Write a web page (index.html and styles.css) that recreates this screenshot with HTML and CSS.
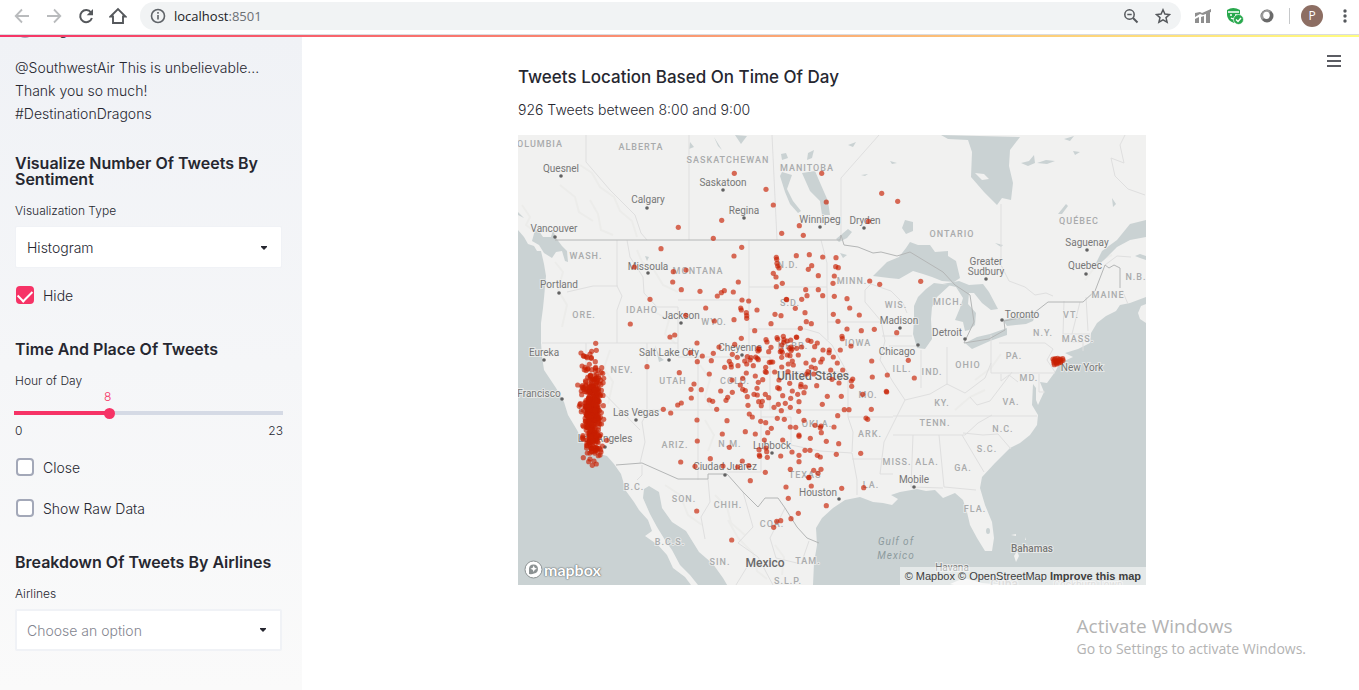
FILE: index.html
```html
<!DOCTYPE html>
<html lang="en">
<head>
<meta charset="utf-8">
<title>Tweets Location</title>
<link rel="stylesheet" href="styles.css">
</head>
<body>
<header class="toolbar">
  <button class="tool" aria-label="Back"><svg width="16" height="16" viewBox="0 0 16 16" fill="none" stroke="#b9bbbd" stroke-width="1.8"><path d="M15 8H2M8 1.5 1.700 8 8 14.500"/></svg></button>
  <button class="tool" aria-label="Forward"><svg width="16" height="16" viewBox="0 0 16 16" fill="none" stroke="#b9bbbd" stroke-width="1.8"><path d="M1 8h13M8 1.500 14.300 8 8 14.500"/></svg></button>
  <button class="tool" aria-label="Reload"><svg width="16" height="16" viewBox="0 0 16 16"><path d="M13 4.500A6 6 0 1 0 13.900 10" fill="none" stroke="#55585c" stroke-width="2"/><path d="M15 1v6.300H8.700z" fill="#55585c"/></svg></button>
  <button class="tool" aria-label="Home"><svg width="18" height="18" viewBox="0 0 18 18" fill="none" stroke="#55585c" stroke-width="1.900"><path d="M1.500 9.500 9 2l7.500 7.500H14V16H4V9.500z"/></svg></button>
  <div class="address">
    <svg width="16" height="16" viewBox="0 0 16 16" fill="none" stroke="#5f6368" stroke-width="1.600"><circle cx="8" cy="8" r="6.500"/><path d="M8 7v4.500M8 4v1.700"/></svg>
    <span class="url">localhost<span class="port">:8501</span></span>
    <button class="tool" aria-label="Zoom"><svg width="16" height="16" viewBox="0 0 16 16" fill="none" stroke="#55585c" stroke-width="1.500"><circle cx="6.500" cy="6.500" r="4.700"/><path d="M10 10l4.500 4.500" stroke-width="2"/><path d="M4.300 6.500h4.400"/></svg></button>
    <button class="tool" aria-label="Bookmark"><svg width="16" height="16" viewBox="0 0 16 16" fill="none" stroke="#55585c" stroke-width="1.500"><path d="M8 1.800l1.900 4.300 4.600.4-3.500 3.100 1.100 4.600L8 11.800l-4.100 2.400L5 9.600 1.500 6.500l4.600-.4z"/></svg></button>
  </div>
  <button class="tool" aria-label="Analytics"><svg width="16" height="16" viewBox="0 0 16 16" fill="#8f8f8f"><path d="M0 5l5-1 2 1 9-4v3L8 7 5 6 0 9zM0 11l4-2v6H0zM6 9l3-1v7H6zM11 6l4-2v11h-4z"/></svg></button>
  <button class="tool" aria-label="Safety"><svg width="18" height="18" viewBox="0 0 18 18"><path d="M1 3q6-4 13 0v5q0 5-6 8-7-3-7-8z" fill="#28a84d"/><path d="M2 5h11M4 8h2M9 8h2M5 11q3 2 5-1" stroke="#fff" fill="none" stroke-width="1.300"/><circle cx="12.500" cy="12.500" r="5" fill="#28a84d" stroke="#fff" stroke-width=".7"/><path d="M10 12.500l2 2 3-3.500" fill="none" stroke="#fff" stroke-width="1.400"/></svg></button>
  <button class="tool" aria-label="Extension"><svg width="16" height="16" viewBox="0 0 16 16"><circle cx="8" cy="8" r="6.500" fill="#6a6a6a"/><path d="M3 12A6.500 6.500 0 0 1 12 3L8 8z" fill="#999"/><ellipse cx="7.500" cy="7.300" rx="3.300" ry="3.600" fill="#fff"/></svg></button>
  <span class="rule"></span>
  <button class="avatar" aria-label="Profile">P</button>
  <button class="tool dots" aria-label="Menu"><svg width="16" height="16" viewBox="0 0 16 16" fill="#55585c"><circle cx="8" cy="3" r="1.700"/><circle cx="8" cy="8" r="1.700"/><circle cx="8" cy="13" r="1.700"/></svg></button>
</header>
<div class="ribbon"></div>
<div class="app">
  <aside class="sidebar">
    <label class="check first"><input type="radio" name="mood"><span>negative</span></label>
    <p class="tweet">@SouthwestAir This is unbelievable... Thank you so much! #DestinationDragons</p>
    <h2>Visualize Number Of Tweets By Sentiment</h2>
    <label class="label" for="viz">Visualization Type</label>
    <div class="picker"><select id="viz"><option>Histogram</option></select><svg class="caret" width="6" height="4" viewBox="0 0 6 4"><path d="M0 0h6v1L3 4 0 1z" fill="#262730"/></svg></div>
    <label class="check"><input type="checkbox" checked><span>Hide</span></label>
    <h2 class="gap">Time And Place Of Tweets</h2>
    <label class="label" for="hour">Hour of Day</label>
    <div class="slider">
      <div class="value"><output for="hour">8</output></div>
      <input id="hour" type="range" min="0" max="23" value="8">
      <div class="ends"><span>0</span><span>23</span></div>
    </div>
    <label class="check"><input type="checkbox"><span>Close</span></label>
    <label class="check next"><input type="checkbox"><span>Show Raw Data</span></label>
    <h2 class="gap">Breakdown Of Tweets By Airlines</h2>
    <label class="label" for="air">Airlines</label>
    <div class="picker outlined"><select id="air" class="empty"><option>Choose an option</option></select><svg class="caret" width="6" height="4" viewBox="0 0 6 4"><path d="M0 0h6v1L3 4 0 1z" fill="#262730"/></svg></div>
  </aside>
  <main class="main">
    <button class="burger" aria-label="Main menu"><svg width="14" height="12" viewBox="0 0 14 12" stroke="#262730" stroke-width="1.500"><path d="M0 1h14M0 6h14M0 11h14"/></svg></button>
    <section class="content">
      <h1>Tweets Location Based On Time Of Day</h1>
      <p class="summary">926 Tweets between 8:00 and 9:00</p>
      <div class="map">
        <svg class="canvas" viewBox="518 135 628 450" role="img" aria-label="Map of tweets">
          <rect x="518" y="135" width="628" height="450" fill="#f1f1f0"/>
          <g class="relief">
            <path d="M522 205l8 12-4 8 12 9M580 165l12 8 8 14 14 10 6 14 12 10 5 16M560 185l15 12 4 15 14 9M590 200l8 14 3 16 12 5M555 262l8 10-5 18 9 15-5 22M637 250l5 12 12 8 9 15 15 7M580 350l12 14-3 20M655 312l14 8-4 14 11 10M700 365l10 14-5 18 8 14M610 350l-6 18 9 14-5 22M705 420l9 15-6 16M715 495l12 12 4 16 14 12M728 520l10 18 15 15 4 18 10 8M775 545l9 12-2 18M665 485l15 10 8 20 14 10M975 380l16-12 10-14M955 410l15-13 15-7M1085 280l15-20 12-5"/>
          </g>
          <g class="water">
            <path d="M518 230l6 7 4 7 6 2 3 5h4l3 13 2 12-2 22-1 10-2 15v20l1 13 2 14 6 9 6 9 8 14 4 13 9 15 7 14 8 8 8 2 7 2 7 8 7 10 5 17 8 11 5 8 9 10 4 11-7 5 13 9 9 10 6 13 12 9 9 12 4-4-8-10-10-10-8-15-7-10-8-13-7-13-7-16 1-9 5-3 10 6 3 16 10 14 14 9 13 21 14 12 10 14 10 17v3H518z"/>
            <path d="M518 212l6 6-6-3zM535 230l4 1 4 6h8l2-7 3 8 6 8 5 5 1 11-3-1-3-10-6 1-4 6-8-5-5-8-7-4z"/>
            <path d="M813 585L814 563L817 545L816 528L822 518L833 508L845 500L860 497L873 502L883 503L892 505L898 499L891 495L900 492L917 489L926 491L935 490L943 498L955 493L963 500L967 512L970 525L977 538L985 551H992L994 538L992 522L985 505L980 488L982 477L995 463L1010 448L1020 443L1030 435L1037 425L1038 415L1032 405L1033 384L1036 388L1036 400L1038 405L1044 392L1040 382L1047 383L1055 372L1060 363L1073 357L1065 353L1078 349L1090 343L1091 333L1097 323L1106 316L1116 311L1120 305L1130 303L1146 297V585z"/>
            <path d="M1093 269l9-18 15-11 13-16 16-4v17l-16 3-13 7-13 13zM1135 256l5-2 6 2v4l-6-2z"/>
            <path d="M941 135l7 4 20 1 4 12-1 25 13 15 13 13 5-7 9 2 2-17-4-17 1-16 10-13z"/>
            <path d="M873 276l14-14 12-5 7-9 4-6 8 3 12 0 5 7 13-1v5l8 5 4 17-6 4-12-1-10-4-9-3-10-3-14 8-10-1z"/>
            <path d="M914 306l4-9 8-8 8-6 16 2-13 12-5 10-1 12 1 20-7 10-8-1-4-14 1-14z"/>
            <path d="M937 285l22-4 10 4 14-1 6 8 9 17-7 1-9-7-8-10-5 0-1 11 8 9-1 12-6 5-4 1-2-9-8-2 5-12 3-10-7-11-13-3z"/>
            <path d="M965 343l12-6 13-3 17-6v7l-17 6-18 8zM1003 320l8-2 15-1 10-5-3 9-7 3-19 2z"/>
            <path d="M802 173l13-2 6 14 7 16 2 14h-8l-2-14-10-10zM782 172l10 3-5 14 6 12 8 10-3 2-8-9-5-12-5-16zM808 153l6-3-2 8-5 2zM781 154l5-1 2 5-6 2z"/>
            <path d="M905 220l8 2v9l-7 3-4-6zM848 229l4 3-5 6-8 4-3-3zM848 145l8-3-3 5zM840 253l7 2-4 3zM861 175l7-1-3 2zM890 161l7 2-5 1zM1021 163l8-2 5-6 1 8-7 3zM1037 163l9-3 9 1-8 3zM1058 214l8-10 2 2-6 8zM1112 198l4 6-3 3zM1064 139l10-3-4 5zM1073 151l7 1-5 3zM690 142l4 5-5 2zM714 137l4 9 4 4zM735 135l12 1-6 8zM995 243l8 2-2 2zM645 256l4 1-2 4zM655 345l5 12 4 3-5 2z"/>
          </g>
          <g fill="#f1f1f0"><path d="M975 173l9 1 5 5-7 1zM1138 313l3-7 5-2v19l-6-4zM1011 535l5-1v2zM1014 556l3-5 2 5-3 6zM1025 537l1 3h-1zM950 584l14-6 18 5 22 2h-50z"/></g>
          <ellipse cx="988" cy="531" rx="2" ry="3" fill="#cad2d3"/>
          <g class="states">
            <path d="M586 135v27l24 28 25 25 6 18 6 7M689 135v105M772 135l5 105M841 240v-62l38-43M1001 204v61l8 16 16 6 10 8 11-2 7 3"/>
            <path d="M567 292l26-6h25M617 240v46l5 10-5 14v33M542 343h136M627 240l3 17 13 20 1 16 13 14h21M678 307v50h92v53M678 300h71M749 240v117M749 287h78M749 329h56l14 4 13 12 15 27M821 240l6 23v24l1 53M827 322h55M586 343v32l54 55M647 343v70l-5 9 3 20-5 21M698 357v123M632 410h215M770 372h70M761 410v62h-34M761 417h30v28l29 6 32 2M852 452l1-20-5-15v-45M852 459h30M852 453l5 27v15M848 417h45M865 290l6-6 20 7 12 12 4 10M865 290v12l16 19 4 20-5 19 13 22 12 18-9 18-12 24-4 32h13M882 336h30M889 346h31M921 350v38M947 347v38M991 335v38h64M999 343h46l8 6-6 11 8 12M905 400l25-6 17-10 18 9 20-15 6-15M970 397l7 8 13-4 22-29M893 416h144M893 435h72l13-12 14-8M963 433l20 2 15-1 13 15M962 435l22 37M939 435l5 52 32 3M913 435l-2 52 32 1M1001 374v7l8-6 9 7M1039 374v18h6M1064 301l-1 34M1063 334h27M1063 342h20v9M1086 297l2 34M1072 334l8-32M1122 290l6 14M1105 265l12-9 14 1"/>
            <path d="M642 465v10l-5 5M708 479l2 23-9 15 4 22M743 492l10 35-15 16 20 14 15 28M785 508l-15 30 6 20 25 6 8-23M750 562l-14 23M1125 135l-5 10 4 18-13-5 4 18 13 13 17 6"/>
          </g>
          <g class="nations"><path d="M555 240h285l1-5 3 10 14 2 15 6 8-1 16 4 13-4 33 20 12 13 15 10 4 27-10 21 25-4 16-9-1-9 26-5 18-14h35l12-11 10-26 4 3 5-3 6 3v20"/><path d="M616 465l26-2 36 16h30v-5h19l16 18 15 15 7-9h13l7 10 12 19 10 11 12 5"/></g>
          <g class="region">
            <text x="540" y="147">OLUMBIA</text><text x="641" y="150">ALBERTA</text><text x="728" y="163">SASKATCHEWAN</text><text x="807" y="171">MANITOBA</text><text x="952" y="237">ONTARIO</text><text x="1079" y="224">QUÉBEC</text><text x="586" y="259">WASH.</text><text x="698" y="274">MONTANA</text><text x="788" y="268">N.D.</text><text x="852" y="284">MINN.</text><text x="584" y="318">ORE.</text><text x="642" y="313">IDAHO</text><text x="714" y="325">WYO.</text><text x="790" y="306">S.D.</text><text x="896" y="308">WIS.</text><text x="948" y="305">MICH.</text><text x="1136" y="280">N.B.</text><text x="1108" y="298">MAINE</text><text x="1071" y="318">VT.</text><text x="1043" y="336">N.Y.</text><text x="1078" y="342">MASS.</text><text x="1014" y="359">PA.</text><text x="793" y="349">NEBR.</text><text x="858" y="346">IOWA</text><text x="622" y="373">NEV.</text><text x="673" y="384">UTAH</text><text x="735" y="384">COLO.</text><text x="590" y="412">CAL.</text><text x="868" y="398">MO.</text><text x="902" y="372">ILL.</text><text x="932" y="375">IND.</text><text x="968" y="368">OHIO</text><text x="1029" y="381">MD.</text><text x="942" y="406">KY.</text><text x="1011" y="405">VA.</text><text x="935" y="426">TENN.</text><text x="1003" y="432">N.C.</text><text x="987" y="452">S.C.</text><text x="963" y="471">GA.</text><text x="870" y="437">ARK.</text><text x="817" y="427">OKLA.</text><text x="675" y="448">ARIZ.</text><text x="730" y="447">N.M.</text><text x="805" y="478">TEXAS</text><text x="897" y="465">MISS.</text><text x="927" y="465">ALA.</text><text x="871" y="488">LA.</text><text x="975" y="512">FLA.</text><text x="634" y="490">B.C.</text><text x="684" y="502">SON.</text><text x="728" y="508">CHIH.</text><text x="670" y="545">B.C.S.</text><text x="720" y="565">SIN.</text><text x="772" y="527">COA.</text><text x="808" y="564">TAM.</text><text x="788" y="584">S.L.P.</text>
          </g>
          <g class="sea"><text x="896" y="545">Gulf of</text><text x="896" y="559">Mexico</text></g>
          <g class="city">
            <text x="561" y="172">Quesnel</text><text x="648" y="203">Calgary</text><text x="723" y="186">Saskatoon</text><text x="744" y="214">Regina</text><text x="820" y="223">Winnipeg</text><text x="865" y="224">Dryden</text><text x="554" y="232">Vancouver</text><text x="559" y="288">Portland</text><text x="648" y="270">Missoula</text><text x="681" y="319">Jackson</text><text x="986" y="265">Greater</text><text x="986" y="275">Sudbury</text><text x="1087" y="246">Saguenay</text><text x="1085" y="269">Quebec</text><text x="1022" y="318">Toronto</text><text x="947" y="336">Detroit</text><text x="899" y="324">Madison</text><text x="897" y="355">Chicago</text><text x="544" y="356">Eureka</text><text x="669" y="356">Salt Lake City</text><text x="740" y="351">Cheyenne</text><text x="539" y="397">Francisco</text><text x="636" y="416">Las Vegas</text><text x="605" y="442">Los Angeles</text><text x="725" y="470">Ciudad Juárez</text><text x="772" y="449">Lubbock</text><text x="818" y="496">Houston</text><text x="914" y="483">Mobile</text><text x="1082" y="371">New York</text><text x="1032" y="552" class="strong">Bahamas</text><text x="952" y="571">Havana</text>
          </g>
          <g class="country"><text x="813" y="380">United States</text><text x="765" y="567">Mexico</text><text x="1004" y="588" class="faint">Cuba</text></g>
          <text x="1088" y="588" class="town">Cockburn Town</text>
          <g id="towns" fill="#626262"></g>
          <g id="tweets" fill="#c81e00" fill-opacity=".65"></g>
        </svg>
        <a class="logo" href="#" aria-label="Mapbox"><svg width="19" height="19" viewBox="0 0 19 19"><circle cx="9.500" cy="9.500" r="8.500" fill="#fff" stroke="#8c9293"/><path d="M5 14V8.500A4.500 4.500 0 1 1 10 13.500Q8 14.500 5 14z" fill="#8c9293"/><path d="M9.700 5.500l1 2.300 2.300 1-2.300 1-1 2.300-1-2.300-2.300-1 2.300-1z" fill="#fff"/></svg><span>mapbox</span></a>
        <div class="credit"><a href="#">© Mapbox</a> <a href="#">© OpenStreetMap</a> <a href="#" class="improve">Improve this map</a></div>
      </div>
    </section>
  </main>
</div>
<div class="notice"><p class="big">Activate Windows</p><p>Go to Settings to activate Windows.</p></div>
<script src="map.js"></script>
</body>
</html>
```
FILE: styles.css
```css
* { box-sizing: border-box; }
body { margin: 0; height: 100vh; display: flex; flex-direction: column; overflow: hidden; background: #fff; color: #262730; font-family: Inter, "Open Sans", sans-serif; font-size: 14px; font-weight: 300; }
h1, h2, p { margin: 0; }
button { border: 0; padding: 0; background: none; font: inherit; color: inherit; }
.toolbar { flex: none; height: 35px; display: flex; align-items: center; padding: 0 6px 3px 14px; border-bottom: 1px solid #dadce0; font-family: "Open Sans", sans-serif; font-weight: 400; }
.tool { flex: none; width: 32px; height: 28px; display: flex; align-items: center; justify-content: center; }
.toolbar > .tool:first-child, .dots { width: 16px; }
.toolbar > .tool:nth-child(2) { margin-left: 8px; }
.address { flex: 1; height: 28px; display: flex; align-items: center; gap: 8px; margin: 0 6px; padding: 0 2px 0 10px; border-radius: 14px; background: #f1f3f4; }
.address .tool + .tool { margin-left: -8px; }
.url { flex: 1; font-size: 13px; color: #202124; }
.port { color: #6c7074; }
.rule { width: 1px; height: 16px; margin: 0 11px 0 6px; background: #c6c8ca; }
.avatar { width: 22px; height: 22px; margin-right: 14px; border-radius: 50%; background: #8d6e63; color: #fff; font-size: 12px; }
.ribbon { flex: none; height: 2px; background: linear-gradient(90deg, #f63366, #fffd80); }
.app { flex: 1; min-height: 0; display: flex; }
.sidebar { flex: none; width: 302px; padding: 0 20px 0 15px; overflow: hidden; background: linear-gradient(180deg, #f0f2f6, #fafafa); }
.tweet { margin-top: 17px; line-height: 23px; }
h2 { margin-top: 30px; font-size: 16px; line-height: 16px; font-weight: 600; }
h2.gap { margin-top: 36px; }
.label { display: block; margin-top: 15px; line-height: 18px; font-size: 12px; }
.picker { position: relative; height: 42px; margin-top: 6px; border: 1px solid #f0f2f6; border-radius: 2px; background: #fff; }
.picker.outlined { border-width: 2px; }
select { width: 100%; height: 100%; appearance: none; border: 0; padding: 0 11px; background: transparent; font: inherit; color: inherit; }
select.empty { padding: 0 10px; color: #83858f; }
.caret { position: absolute; right: 14px; top: 19px; pointer-events: none; }
.outlined .caret { top: 17px; }
.check { display: flex; align-items: center; gap: 9px; height: 20px; margin-top: 17px; padding-left: 1px; }
.check.first { margin-top: -18px; }
.check.next { margin-top: 21px; }
.check input { appearance: none; width: 18px; height: 18px; margin: 0; border: 2px solid #a3a8b8; border-radius: 4px; background: #fff; }
.check input[type="radio"] { border-radius: 50%; }
.check input:checked { display: grid; justify-items: center; align-items: start; padding-top: 4px; border: 0; background: #f63366; }
.check input:checked::after { content: ""; width: 12px; height: 7px; border: solid #fff; border-width: 0 0 2px 2px; transform: rotate(-45deg); }
.slider { margin: 0 -1px; font-size: 12px; }
.value { padding-left: 32%; line-height: 14px; color: #f63366; }
.value output { display: block; padding-left: 4px; }
input[type="range"] { display: block; width: 100%; height: 12px; margin: 3px 0; appearance: none; border-radius: 2px; background: linear-gradient(90deg, #f63366 35%, #d5dae5 35%) center / 100% 4px no-repeat; }
input[type="range"]::-webkit-slider-thumb { appearance: none; width: 11px; height: 11px; border-radius: 50%; background: #f63366; }
.ends { display: flex; justify-content: space-between; line-height: 18px; padding-left: 1px; margin-bottom: 16px; }
.main { flex: 1; min-width: 0; position: relative; padding: 28px 0 0 3px; }
.burger { position: absolute; right: 18px; top: 18px; line-height: 0; }
.content { max-width: 628px; margin: 0 auto; }
h1 { font-size: 17px; line-height: 24px; font-weight: 500; }
.summary { margin: 9px 0 14px; line-height: 23px; }
.map { position: relative; font-weight: 400; }
.canvas { display: block; width: 100%; height: auto; font-family: Roboto, sans-serif; }
.canvas text { text-anchor: middle; paint-order: stroke; stroke: #f1f1f0; stroke-opacity: .7; stroke-width: 2px; }
.water { fill: #cad2d3; }
.relief { fill: none; stroke: #ececea; stroke-width: 2; }
.states { fill: none; stroke: #dfdfdf; }
.nations { fill: none; stroke: #b4b6b6; }
.region { font-size: 9px; font-weight: 500; fill: #a9abac; letter-spacing: 1px; }
.city { font-size: 10px; fill: #777; }
.city .strong { font-weight: 500; }
.country { font-size: 12px; font-weight: 500; fill: #6a6a6a; }
.country .faint, .town { fill: #bbb; }
.town { font-size: 10px; }
.canvas .sea text { font-size: 10px; font-style: italic; fill: #8d9b9e; letter-spacing: 1px; stroke: none; }
.logo { position: absolute; left: 6px; bottom: 6px; display: flex; align-items: center; gap: 1px; color: #fff; text-decoration: none; font: 700 16px/19px Lato, sans-serif; text-shadow: 0 0 1px #70787a, 0 0 1px #70787a, 0 0 2px #70787a; }
.credit { position: absolute; right: 0; bottom: 0; padding: 0 5px; line-height: 18px; background: rgba(255, 255, 255, .5); font-family: "Liberation Sans", sans-serif; font-size: 11px; }
.credit a { color: #404040; text-decoration: none; }
.credit .improve { font-weight: 700; }
.notice { position: absolute; right: 53px; bottom: 32px; color: #b3b3b3; font-family: "Open Sans", sans-serif; font-weight: 400; line-height: 19px; pointer-events: none; }
.notice .big { font-size: 19px; line-height: 26px; }
```
FILE: map.js
```js
const SVG = "http://www.w3.org/2000/svg";

function dot(layer, x, y, r) {
  const c = document.createElementNS(SVG, "circle");
  c.setAttribute("cx", x.toFixed(1));
  c.setAttribute("cy", y.toFixed(1));
  c.setAttribute("r", r);
  layer.appendChild(c);
}

const towns = document.getElementById("towns");
"561,176 647,208 723,190 744,218 820,227 864,228 555,237 559,293 648,273 681,323 986,279 1087,250 1086,274 1002,320 965,339 900,328 918,345 544,360 669,360 742,355 562,399 636,420 605,447 725,475 772,453 839,499 914,487"
  .split(" ").forEach(p => { const [x, y] = p.split(",").map(Number); dot(towns, x, y, 1.8); });

// Each group holds an origin and its points in thirds of a map unit.
const groups = [
  [510, 130, "635,271 505,292 610,325 453,356 373,411 490,425 528,420 488,456 514,479 570,484 622,498 634,488 643,482 420,508 361,582 587,534 527,556 613,573 480,621 494,615 541,668 257,640 213,669 220,677 229,680 245,664 259,661 240,672 244,683"],
  [730, 130, "13,130 275,130 108,178 130,225 289,216 208,287 155,310 220,316 455,190 503,214 415,274 35,352 12,378 139,382 140,388 141,400 143,408 147,414 199,377 238,374 278,381 318,383 235,418 245,407 317,410 325,413 313,438 309,460 130,430 138,441 265,437 139,470 157,460 227,479 265,479 25,456 10,486 231,497 278,497 313,499 351,506 215,508 169,508 170,509 196,535 225,548 419,453 449,463 572,454 36,510 56,513 32,534 34,540 81,540 49,548 50,557 50,565 12,569 135,553 153,557 123,581 229,575 244,581 310,553 324,574 359,534 388,555 433,598 500,608"],
  [690, 325, "331,10 194,17 471,12 514,17 154,40 21,54 87,66 134,58 228,44 231,51 261,38 263,43 280,34 282,44 281,52 291,48 302,45 319,36 320,37 243,67 236,80 205,70 208,74 204,78 70,85 37,93 22,110 64,107 127,88 142,97 118,109 123,118 124,126 104,127 144,122 164,108 172,95 183,98 180,105 170,117 197,96 202,100 205,104 190,122 243,111 248,111 238,112 227,127 226,140 229,142 254,141 275,60 274,76 277,82 271,80 275,97 292,90 300,92 298,70 303,66 306,72 303,77 320,70 325,90 307,108 310,120 295,117 294,140 275,126 335,66 354,46 363,49 382,54 374,65 399,75 418,75 417,83 451,75 456,34 457,41 483,63 430,96 397,102 371,105 392,111 348,114 442,114 364,126 376,130 354,140 350,147 371,147 458,135 422,135 267,165 299,175 333,178 346,186 380,182 332,185 447,174 426,163 484,168 488,162 485,184 518,208 454,214 412,214 397,238 342,203 323,208 307,198 263,188 268,191 278,212 302,220 327,230 236,218 226,208 202,210 192,208 201,190 196,153 218,164 205,172 169,144 158,160 151,180 158,193 166,197 172,215 127,202 92,198 113,217 108,226 68,229 58,225 34,194 3,193 12,177 4,219 58,147 126,165 80,253 174,241 178,267 187,276 206,230 217,229 214,242 252,247 265,238 286,235 301,247 274,257 326,259 262,280 283,283 342,286 375,301 393,303 391,308 394,323 432,306 443,272 463,254 477,254 528,279 533,283 361,340 327,330 327,334 317,307 301,306 227,293 212,289 244,310 233,323 196,327 166,320 111,287 21,285 97,327 22,348 118,367 61,401 15,424 99,423 157,408 143,426 176,422 226,442 181,467 223,345 207,374 228,369 230,380 208,390 209,394 232,397 278,345 306,381 272,393 345,376 360,376 327,391 327,410 301,433 382,391 391,396 439,388 446,356 409,349 393,433 371,436 384,445 356,457 357,458 512,385"],
  [730, 355, "425,18 427,66 535,16 472,60 553,69 469,109 470,111 424,163 244,393 168,396 175,430 335,400 401,398 289,452 205,475 183,491 152,497 140,499 131,517 5,555"],
  [510, 355, "411,35 508,53 503,150 514,144 460,163 482,174 512,321 560,468 203,90 217,92 214,108 211,146 208,154 214,170 281,70 275,38 278,55 280,152 281,193 290,256 270,300 220,308 265,302 236,320 247,331 259,327 223,44 256,20 238,28 222,4 232,8 244,10 234,42 245,44 256,40 264,46 232,294 246,290 258,284 268,280 240,312 252,318"],
  [930, 355, "369,12 376,11 383,10 391,12 398,11 371,18 378,18 386,18 393,18 399,16 372,24 379,24 386,24 392,22 373,29 380,27 374,14 388,14 382,21"]
];
const tweets = document.getElementById("tweets");
for (const [x0, y0, list] of groups) {
  for (const p of list.split(" ")) {
    const [x, y] = p.split(",").map(Number);
    dot(tweets, x0 + x / 3, y0 + y / 3, 2.6);
  }
}

// Dense western cluster: a seeded spread around one meridian.
let seed = 11;
const rand = () => (seed = (seed * 16807) % 2147483647) / 2147483647;
for (let i = 0; i < 390; i++) {
  const a = (rand() + rand() + rand() - 1.5) / 1.5;
  const b = (rand() + rand() - 1);
  dot(tweets, 592.5 + a * 13, 412 + b * 50, 2.6);
}
```
